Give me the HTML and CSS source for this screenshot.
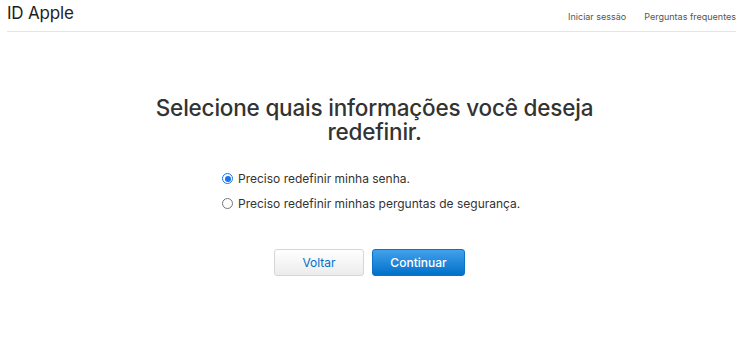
FILE: index.html
```html
<!DOCTYPE html>
<html lang="pt-BR">
<head>
<meta charset="utf-8">
<title>ID Apple</title>
<link rel="stylesheet" href="styles.css">
</head>
<body>
<header class="topbar">
  <div class="brand">ID Apple</div>
  <nav class="nav">
    <a class="nav-link" href="#">Iniciar sessão</a>
    <a class="nav-link" href="#">Perguntas frequentes</a>
  </nav>
</header>
<main class="content">
  <h1 class="title">Selecione quais informações você deseja<br>redefinir.</h1>
  <div class="options">
    <label class="option"><span class="radio checked"></span>Preciso redefinir minha senha.</label>
    <label class="option"><span class="radio"></span>Preciso redefinir minhas perguntas de segurança.</label>
  </div>
  <div class="actions">
    <button class="btn btn-secondary">Voltar</button>
    <button class="btn btn-primary">Continuar</button>
  </div>
</main>
</body>
</html>
```
FILE: styles.css
```css
* { box-sizing: border-box; }
html, body { margin: 0; padding: 0; background: #fff; }
body {
  font-family: Inter, "Noto Sans", "Liberation Sans", sans-serif;
  color: #333;
  width: 749px;
}
.topbar {
  margin: 0 13px 0 7px;
  height: 32px;
  display: flex;
  justify-content: space-between;
  align-items: flex-start;
  border-bottom: 1px solid #e5e5e5;
}
.brand {
  font-size: 17px;
  line-height: 27px;
  color: #1d1d1f;
  letter-spacing: -0.2px;
}
.nav {
  display: flex;
  gap: 18px;
  padding-top: 10px;
}
.nav-link {
  font-size: 9px;
  color: #555;
  text-decoration: none;
  line-height: 14px;
}
.content {
  display: flex;
  flex-direction: column;
  align-items: center;
}
.title {
  margin: 64px 0 0;
  font-size: 22.5px;
  font-weight: 500;
  line-height: 24px;
  text-align: center;
  color: #333;
  letter-spacing: -0.2px;
}
.options {
  margin-top: 26px;
  display: flex;
  flex-direction: column;
  gap: 8px;
  align-self: flex-start;
  margin-left: 222px;
}
.option {
  display: flex;
  align-items: center;
  font-size: 12px;
  line-height: 17px;
  color: #333;
}
.radio {
  width: 11px;
  height: 11px;
  border-radius: 50%;
  border: 1px solid #767676;
  margin-right: 5px;
  background: #fff;
  position: relative;
}
.radio.checked { border-color: #1a73e8; }
.radio.checked::after {
  content: "";
  position: absolute;
  left: 1.5px; top: 1.5px;
  width: 6px; height: 6px;
  border-radius: 50%;
  background: #1a73e8;
}
.actions {
  margin-top: 37px;
  display: flex;
  gap: 8px;
  margin-left: -10px;
}
.btn {
  height: 27px;
  font-family: Inter, "Noto Sans", "Liberation Sans", sans-serif;
  font-size: 12px;
  border-radius: 3px;
  padding: 0;
  cursor: pointer;
}
.btn-secondary {
  width: 90px;
  color: #0070c9;
  background: linear-gradient(#ffffff, #ececec);
  border: 1px solid #d6d6d6;
}
.btn-primary {
  width: 93px;
  color: #fff;
  font-weight: 500;
  background: linear-gradient(#42a1ec, #0070c9);
  border: 1px solid #0a72c8;
}
```
